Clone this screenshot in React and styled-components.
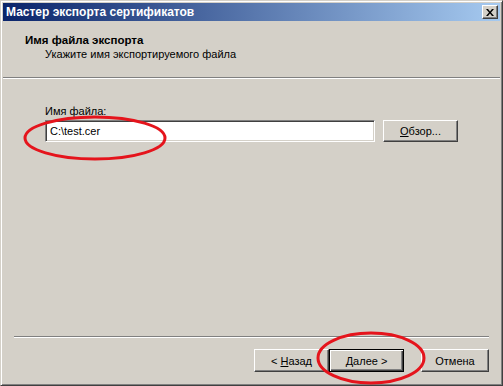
import React from 'react'
import styled, { createGlobalStyle } from 'styled-components'

const Global = createGlobalStyle`
  html, body {
    margin: 0;
    padding: 0;
    background: #d4d0c8;
  }
  body {
    font-family: "Liberation Sans", Arial, sans-serif;
    font-size: 11px;
    color: #000;
  }
`

const Window = styled.div`
  position: relative;
  width: 503px;
  height: 386px;
  box-sizing: border-box;
  background: #d4d0c8;
  border: 1px solid;
  border-color: #d4d0c8 #404040 #404040 #d4d0c8;
  box-shadow: inset 1px 1px #fff, inset -1px -1px #808080;
  padding: 2px;
  display: flex;
  flex-direction: column;
`

const TitleBar = styled.div`
  height: 18px;
  flex: none;
  display: flex;
  align-items: center;
  justify-content: space-between;
  padding: 0 2px 0 3px;
  background: linear-gradient(to right, #0a246a, #a6caf0);
  color: #fff;
  font-weight: bold;
  font-size: 12px;
`

const CloseButton = styled.div`
  width: 16px;
  height: 14px;
  box-sizing: border-box;
  background: #d4d0c8;
  border: 1px solid;
  border-color: #fff #404040 #404040 #fff;
  box-shadow: inset -1px -1px #808080;
  display: flex;
  align-items: center;
  justify-content: center;
`

const Header = styled.div`
  height: 56px;
  flex: none;
  box-sizing: border-box;
  padding: 12px 0 0 22px;
  line-height: 14px;
`

const HeaderTitle = styled.div`
  font-weight: bold;
  font-size: 11.5px;
`

const HeaderSub = styled.div`
  padding-left: 20px;
`

const Separator = styled.div`
  flex: none;
  height: 1px;
  background: #808080;
  border-bottom: 1px solid #fff;
  margin: ${p => (p.$inset ? '0 11px' : '0')};
`

const Body = styled.div`
  flex: 1;
  padding: 26px 42px 0;
`

const Label = styled.div`
  line-height: 13px;
  margin-bottom: 2px;
`

const Row = styled.div`
  display: flex;
  gap: 8px;
  align-items: flex-start;
`

const Input = styled.div`
  width: 330px;
  height: 22px;
  box-sizing: border-box;
  background: #fff;
  border: 1px solid;
  border-color: #808080 #fff #fff #808080;
  box-shadow: inset 1px 1px #404040, inset -1px -1px #d4d0c8;
  padding: 0 4px;
  display: flex;
  align-items: center;
`

const Button = styled.div`
  width: ${p => p.$w || 75}px;
  height: ${p => p.$h || 23}px;
  box-sizing: border-box;
  background: #d4d0c8;
  border: 1px solid;
  border-color: ${p => (p.$default ? '#000' : '#fff #404040 #404040 #fff')};
  box-shadow: ${p =>
    p.$default
      ? 'inset 1px 1px #fff, inset -1px -1px #404040, inset -2px -2px #808080'
      : 'inset -1px -1px #808080'};
  display: flex;
  align-items: center;
  justify-content: center;
  u {
    text-decoration: underline;
  }
`

const Footer = styled.div`
  flex: none;
  display: flex;
  justify-content: flex-end;
  padding: 11px 11px 11px 0;
`

const Gap = styled.div`
  width: ${p => p.$w}px;
`

const Marks = styled.svg`
  position: absolute;
  left: 0;
  top: 0;
  pointer-events: none;
`

export default function App() {
  return (
    <>
      <Global />
      <Window>
        <TitleBar>
          <span>Мастер экспорта сертификатов</span>
          <CloseButton>
            <svg width="8" height="7" viewBox="0 0 8 7">
              <path d="M0 0h2l2 2.5L6 0h2L5 3.5 8 7H6L4 4.5 2 7H0l3-3.5z" fill="#000" />
            </svg>
          </CloseButton>
        </TitleBar>
        <Header>
          <HeaderTitle>Имя файла экспорта</HeaderTitle>
          <HeaderSub>Укажите имя экспортируемого файла</HeaderSub>
        </Header>
        <Separator />
        <Body>
          <Label>Имя файла:</Label>
          <Row>
            <Input>C:\test.cer</Input>
            <Button $h={22}>
              <span><u>О</u>бзор...</span>
            </Button>
          </Row>
        </Body>
        <Separator $inset />
        <Footer>
          <Button>
            <span>&lt; <u>Н</u>азад</span>
          </Button>
          <Button $default>
            <span><u>Д</u>алее &gt;</span>
          </Button>
          <Gap $w={17} />
          <Button $w={68}>Отмена</Button>
        </Footer>
        <Marks width="503" height="386">
          <ellipse cx="94" cy="137" rx="70" ry="21" fill="none" stroke="#e5141c" strokeWidth="3" />
          <ellipse cx="370" cy="357" rx="53" ry="25" fill="none" stroke="#e5141c" strokeWidth="3" />
        </Marks>
      </Window>
    </>
  )
}
